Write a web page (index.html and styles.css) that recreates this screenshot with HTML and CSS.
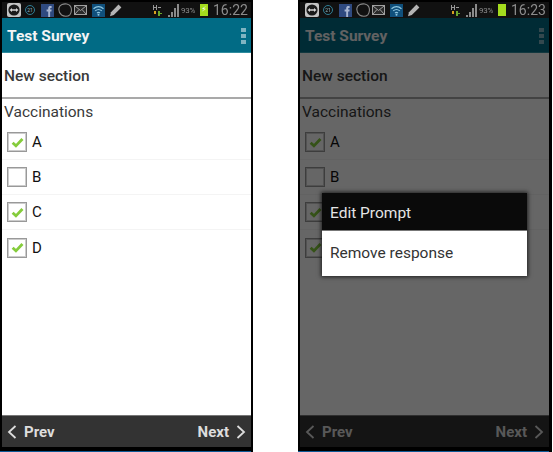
FILE: index.html
```html
<!DOCTYPE html>
<html lang="en">
  <head>
    <meta charset="UTF-8" />
    <title>Test Survey</title>
    <link rel="stylesheet" href="styles.css" />
  </head>
  <body>
    <svg class="icon-defs" width="0" height="0">
      <symbol id="i-viewer" viewBox="0 0 14 14">
        <rect width="14" height="14" rx="2" fill="#c4c4c4" />
        <circle cx="7" cy="7" r="5.6" fill="#1a1a1a" />
        <path d="M2.600 7 5 5v1.200h4V5l2.400 2L9 9V7.800H5V9z" fill="#d8d8d8" />
      </symbol>
      <symbol id="i-fb" viewBox="0 0 13 13">
        <rect width="13" height="13" fill="#2f4a80" />
        <path d="M7.200 13V7.600H5.600V5.600h1.600V4.200C7.200 2.600 8.200 2 9.400 2h1.200v2H9.800c-.5 0-.7.2-.7.7v.9h1.500l-.2 2H9.100V13z" fill="#a9b6d2" />
      </symbol>
      <symbol id="i-blob" viewBox="0 0 14 14">
        <path d="M4 1.500C7 .3 11 .8 12.600 3.400c1.400 2.500 1 6.400-.8 8.400-2 1.900-6 1.800-8.200.2C1.300 10.200.6 6.800 1 4.800 1.300 3.300 2.500 2.100 4 1.500z" fill="none" stroke="#8a8a8a" stroke-width="1.100" />
      </symbol>
      <symbol id="i-mail" viewBox="0 0 13 10">
        <rect x=".5" y=".5" width="12" height="9" fill="#2a2a2a" stroke="#a0a0a0" />
        <path d="m1 1 5.500 4.500L12 1M1 9l4-4.500M12 9 8 4.500" fill="none" stroke="#a0a0a0" />
      </symbol>
      <symbol id="i-wifi" viewBox="0 0 13 13">
        <rect width="13" height="13" fill="#10507c" />
        <path d="M1.500 4.800c3-2.600 7-2.600 10 0M3.200 6.900c2-1.700 4.600-1.700 6.600 0M5 9c1-.8 2-.8 3 0" fill="none" stroke="#8fc6e0" stroke-width="1.200" />
        <circle cx="6.500" cy="10.800" r="1" fill="#8fc6e0" />
      </symbol>
      <symbol id="i-pen" viewBox="0 0 13 13">
        <path d="M9.500.6 12.400 3.500 4.800 11 1 12.300 2 8.300z" fill="#b4b4b4" />
      </symbol>
      <symbol id="i-net" viewBox="0 0 9 11">
        <path d="M0 0h1v2h2V0h1v5H3V3H1v2H0zM5 2h3v1H5z" fill="#999" />
        <path d="M1 9V6h2v3z" fill="#d8a020" />
        <path d="M5 6h2v2h2v1H7v2H5z" fill="#6aa82c" />
      </symbol>
      <symbol id="i-signal" viewBox="0 0 12 13">
        <path d="M0 13v-2h2v2zM3 13V8h2v5zM6 13V4h2v9zM9 13V0h2v13z" fill="#8a8a8a" />
      </symbol>
      <symbol id="i-check" viewBox="0 0 16 14">
        <path d="M1.800 7.400 6 11.300 14.300 2.600" fill="none" stroke="#85cc3c" stroke-width="3.600" />
      </symbol>
      <symbol id="i-dots" viewBox="0 0 5 16">
        <path d="M0 0h5v4H0zM0 6h5v4H0zM0 12h5v4H0z" fill="#7fb4c2" />
      </symbol>
      <symbol id="i-left" viewBox="0 0 10 14">
        <path d="M8.500 1 2 7l6.500 6" fill="none" stroke="currentColor" stroke-width="1.800" />
      </symbol>
      <symbol id="i-right" viewBox="0 0 10 14">
        <path d="M1.500 1 8 7l-6.500 6" fill="none" stroke="currentColor" stroke-width="1.800" />
      </symbol>
    </svg>

    <div class="screens">
      <div class="phone">
        <div class="status-bar">
          <svg class="ico ico-viewer"><use href="#i-viewer" /></svg>
          <span class="date-badge">21</span>
          <svg class="ico ico-fb"><use href="#i-fb" /></svg>
          <svg class="ico ico-blob"><use href="#i-blob" /></svg>
          <svg class="ico ico-mail"><use href="#i-mail" /></svg>
          <svg class="ico ico-wifi"><use href="#i-wifi" /></svg>
          <svg class="ico ico-pen"><use href="#i-pen" /></svg>
          <div class="status-right">
            <svg class="ico ico-net"><use href="#i-net" /></svg>
            <svg class="ico ico-signal"><use href="#i-signal" /></svg>
            <span class="battery-pct">93%</span>
            <span class="battery"><span class="bolt">&#9889;&#xFE0E;</span></span>
            <span class="clock">16:22</span>
          </div>
        </div>
        <div class="screen">
          <div class="app-bar">
            <span class="app-title">Test Survey</span>
            <svg class="ico ico-dots"><use href="#i-dots" /></svg>
          </div>
          <div class="survey">
            <div class="section-title">New section</div>
            <div class="prompt">Vaccinations</div>
            <div class="option">
              <span class="checkbox"><svg class="ico ico-check"><use href="#i-check" /></svg></span>
              <span>A</span>
            </div>
            <div class="option">
              <span class="checkbox"></span>
              <span>B</span>
            </div>
            <div class="option">
              <span class="checkbox"><svg class="ico ico-check"><use href="#i-check" /></svg></span>
              <span>C</span>
            </div>
            <div class="option no-line">
              <span class="checkbox"><svg class="ico ico-check"><use href="#i-check" /></svg></span>
              <span>D</span>
            </div>
          </div>
          <div class="nav-bar">
            <span class="nav-btn"><svg class="ico ico-arrow"><use href="#i-left" /></svg>Prev</span>
            <span class="nav-btn">Next<svg class="ico ico-arrow"><use href="#i-right" /></svg></span>
          </div>
        </div>
        <div class="bottom-line"></div>
      </div>

      <div class="phone">
        <div class="status-bar">
          <svg class="ico ico-viewer"><use href="#i-viewer" /></svg>
          <span class="date-badge">21</span>
          <svg class="ico ico-fb"><use href="#i-fb" /></svg>
          <svg class="ico ico-blob"><use href="#i-blob" /></svg>
          <svg class="ico ico-mail"><use href="#i-mail" /></svg>
          <svg class="ico ico-wifi"><use href="#i-wifi" /></svg>
          <svg class="ico ico-pen"><use href="#i-pen" /></svg>
          <div class="status-right">
            <svg class="ico ico-net"><use href="#i-net" /></svg>
            <svg class="ico ico-signal"><use href="#i-signal" /></svg>
            <span class="battery-pct">93%</span>
            <span class="battery"></span>
            <span class="clock">16:23</span>
          </div>
        </div>
        <div class="screen">
          <div class="app-bar">
            <span class="app-title">Test Survey</span>
            <svg class="ico ico-dots"><use href="#i-dots" /></svg>
          </div>
          <div class="survey">
            <div class="section-title">New section</div>
            <div class="prompt">Vaccinations</div>
            <div class="option">
              <span class="checkbox"><svg class="ico ico-check"><use href="#i-check" /></svg></span>
              <span>A</span>
            </div>
            <div class="option">
              <span class="checkbox"></span>
              <span>B</span>
            </div>
            <div class="option">
              <span class="checkbox"><svg class="ico ico-check"><use href="#i-check" /></svg></span>
              <span>C</span>
            </div>
            <div class="option no-line">
              <span class="checkbox"><svg class="ico ico-check"><use href="#i-check" /></svg></span>
              <span>D</span>
            </div>
          </div>
          <div class="nav-bar">
            <span class="nav-btn"><svg class="ico ico-arrow"><use href="#i-left" /></svg>Prev</span>
            <span class="nav-btn">Next<svg class="ico ico-arrow"><use href="#i-right" /></svg></span>
          </div>
          <div class="dim"></div>
          <div class="context-menu">
            <div class="menu-title">Edit Prompt</div>
            <div class="menu-item">Remove response</div>
          </div>
        </div>
        <div class="bottom-line"></div>
      </div>
    </div>
  </body>
</html>
```

FILE: styles.css
```css
* {
  margin: 0;
  padding: 0;
  box-sizing: border-box;
}

body {
  background: #ffffff;
  font-family: Roboto, "Liberation Sans", sans-serif;
  overflow: hidden;
}

.icon-defs {
  position: absolute;
}

.ico {
  display: block;
  flex: none;
}

/* the source screenshot is a soft upscale */
.screens {
  display: flex;
  gap: 45px;
  width: 553px;
  height: 452px;
  filter: blur(0.35px);
}

.phone {
  width: 253px;
  height: 452px;
  background: #000000;
  padding: 2px 2px 0;
  display: flex;
  flex-direction: column;
}

.phone:last-child {
  width: 254px;
  padding-right: 3px;
}

/* Status bar */
.status-bar {
  height: 16px;
  display: flex;
  align-items: center;
  padding-left: 5px;
  background: #111111;
  color: #8c8c8c;
}

.ico-viewer {
  width: 14px;
  height: 14px;
}

.date-badge {
  width: 10px;
  height: 10px;
  margin-left: 4px;
  border: 1px solid #2f7f96;
  border-radius: 50%;
  font-size: 5px;
  line-height: 8px;
  text-align: center;
  color: #8fb8c4;
}

.ico-fb {
  width: 13px;
  height: 13px;
  margin-left: 6px;
}

.ico-blob {
  width: 14px;
  height: 14px;
  margin-left: 4px;
}

.ico-mail {
  width: 13px;
  height: 10px;
  margin-left: 2px;
}

.ico-wifi {
  width: 13px;
  height: 13px;
  margin-left: 5px;
}

.ico-pen {
  width: 13px;
  height: 13px;
  margin-left: 4px;
}

.status-right {
  margin-left: auto;
  display: flex;
  align-items: center;
  padding-right: 7px;
}

.ico-net {
  width: 9px;
  height: 11px;
}

.ico-signal {
  width: 12px;
  height: 13px;
  margin-left: 6px;
}

.battery-pct {
  font-size: 8px;
  letter-spacing: -0.2px;
  margin-left: 1px;
  width: 15px;
}

.battery {
  position: relative;
  width: 8px;
  height: 12px;
  margin-left: 4px;
  background: #a4dc1e;
  display: flex;
  align-items: center;
  justify-content: center;
  color: #ffffff;
  font-size: 8px;
  line-height: 1;
}

.bolt {
  font-family: "DejaVu Sans", sans-serif;
}

.clock {
  font-size: 14px;
  margin-left: 5px;
  width: 31px;
}

/* Screen */
.screen {
  position: relative;
  height: 429px;
  width: 249px;
  display: flex;
  flex-direction: column;
}

.app-bar {
  height: 35px;
  background: #016b85;
  border-bottom: 1px solid #2f8c9e;
  display: flex;
  align-items: center;
  justify-content: space-between;
  padding: 1px 5px 0;
  color: #f4f4f4;
}

.app-title {
  font-size: 15.500px;
  font-weight: 700;
}

.ico-dots {
  width: 5px;
  height: 16px;
}

.survey {
  flex: 1;
  background: #ffffff;
  color: #3a3a3a;
}

.section-title {
  height: 46px;
  padding: 14px 0 0 2px;
  font-size: 15.500px;
  font-weight: 500;
  line-height: 18px;
  border-bottom: 2px solid #a9a9a9;
}

.prompt {
  height: 26px;
  padding: 4px 0 0 2px;
  font-size: 15.500px;
  line-height: 18px;
}

.option {
  height: 35px;
  display: flex;
  align-items: center;
  gap: 5px;
  padding-left: 5px;
  border-bottom: 1px solid #f4f4f4;
  font-size: 15px;
  color: #111111;
}

.no-line {
  border-bottom: none;
}

.checkbox {
  width: 20px;
  height: 20px;
  border: 1px solid #999999;
  box-shadow: inset 0 0 0 1px #cccccc;
  display: flex;
  align-items: center;
  justify-content: center;
}

.ico-check {
  width: 13px;
  height: 11px;
}

/* Bottom buttons */
.nav-bar {
  height: 32px;
  background: #333333;
  border-top: 1px solid #777777;
  display: flex;
  align-items: center;
  justify-content: space-between;
  padding: 0 5px;
  color: #dddddd;
  font-size: 15px;
  font-weight: 700;
}

.nav-btn {
  display: flex;
  align-items: center;
  gap: 7px;
}

.ico-arrow {
  width: 10px;
  height: 14px;
}

.bottom-line {
  margin: 4px 0 0 -2px;
  height: 1px;
  background: #0e5a96;
}

/* Dialog state */
.dim {
  position: absolute;
  inset: 0;
  background: rgba(0, 0, 0, 0.6);
}

.context-menu {
  position: absolute;
  left: 22px;
  top: 175px;
  width: 205px;
  box-shadow: 0 0 4px 1px rgba(0, 0, 0, 0.7);
  font-size: 15.500px;
}

.menu-title {
  height: 38px;
  padding: 11px 0 0 8px;
  line-height: 18px;
  background: #0a0a0a;
  color: #e4e4e4;
  border-bottom: 1px solid #777777;
}

.menu-item {
  height: 45px;
  padding: 13px 0 0 8px;
  line-height: 18px;
  background: #ffffff;
  color: #333333;
}
```
